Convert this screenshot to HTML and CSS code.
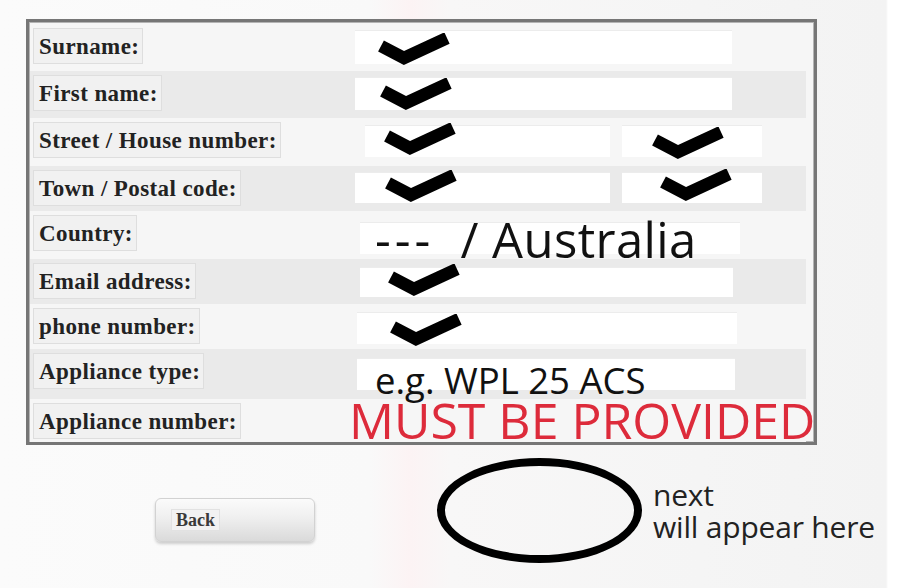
FILE: index.html
```html
<!DOCTYPE html>
<html>
<head>
<meta charset="utf-8">
<link rel="stylesheet" href="styles.css">
</head>
<body>
<div class="page">
  <div class="form">
    <div class="row r1">
      <div class="label">Surname:</div>
      <div class="fields">
        <div class="field"><svg class="check k1" viewBox="0 0 76 34" width="76" height="34"><polyline points="4,13 27,25 70,5"/></svg></div>
      </div>
    </div>
    <div class="row r2 dark">
      <div class="label">First name:</div>
      <div class="fields">
        <div class="field"><svg class="check k2" viewBox="0 0 76 34" width="76" height="34"><polyline points="4,13 27,25 70,5"/></svg></div>
      </div>
    </div>
    <div class="row r3">
      <div class="label">Street / House number:</div>
      <div class="fields">
        <div class="field main"><svg class="check k3a" viewBox="0 0 76 34" width="76" height="34"><polyline points="4,13 27,25 70,5"/></svg></div>
        <div class="field small"><svg class="check k3b" viewBox="0 0 76 34" width="76" height="34"><polyline points="4,13 27,25 70,5"/></svg></div>
      </div>
    </div>
    <div class="row r4 dark">
      <div class="label">Town / Postal code:</div>
      <div class="fields">
        <div class="field main"><svg class="check k4a" viewBox="0 0 76 34" width="76" height="34"><polyline points="4,13 27,25 70,5"/></svg></div>
        <div class="field small"><svg class="check k4b" viewBox="0 0 76 34" width="76" height="34"><polyline points="4,13 27,25 70,5"/></svg></div>
      </div>
    </div>
    <div class="row r5">
      <div class="label">Country:</div>
      <div class="fields">
        <div class="field country"><span class="dashes">---</span>&nbsp; / Australia</div>
      </div>
    </div>
    <div class="row r6 dark">
      <div class="label">Email address:</div>
      <div class="fields">
        <div class="field"><svg class="check k6" viewBox="0 0 76 34" width="76" height="34"><polyline points="4,13 27,25 70,5"/></svg></div>
      </div>
    </div>
    <div class="row r7">
      <div class="label">phone number:</div>
      <div class="fields">
        <div class="field"><svg class="check k7" viewBox="0 0 76 34" width="76" height="34"><polyline points="4,13 27,25 70,5"/></svg></div>
      </div>
    </div>
    <div class="row r8 dark">
      <div class="label">Appliance type:</div>
      <div class="fields">
        <div class="field example">e.g. WPL 25 ACS</div>
      </div>
    </div>
    <div class="row r9">
      <div class="label">Appliance number:</div>
      <div class="fields">
        <div class="must">MUST BE PROVIDED</div>
      </div>
    </div>
  </div>
  <div class="actions">
    <div class="back"><span class="back-text">Back</span></div>
    <div class="ring"></div>
    <div class="note">next<br>will appear here</div>
  </div>
</div>
</body>
</html>
```

FILE: styles.css
```css
html, body {
  margin: 0;
  padding: 0;
}
body {
  width: 903px;
  height: 588px;
  overflow: hidden;
  background: linear-gradient(to right, #fbfbfb 0, #f9f9f9 370px, #fcf3f4 410px, #f8f7f7 450px, #f5f5f5 700px, #f3f3f3 886px, #ffffff 888px);
  font-family: "Liberation Serif", serif;
}
.page {
  padding: 19px 0 0 26px;
}
.form {
  width: 784px;
  border: 3px solid #767676;
  box-shadow: inset 0 0 0 1px #b4b4b4;
  background: #f6f6f6;
  padding: 2px 0 0 1px;
}
.row {
  display: grid;
  grid-template-columns: 322px 1fr;
  align-items: start;
  padding-left: 3px;
  margin-right: 8px;
  background: #f6f6f6;
}
.row.dark {
  background: #eaeaea;
}
.r1 { height: 47px; }
.r2 { height: 47px; }
.r3 { height: 48px; }
.r4 { height: 45px; }
.r5 { height: 48px; }
.r6 { height: 45px; }
.r7 { height: 45px; }
.r8 { height: 50px; }
.r9 { height: 43px; }

.label {
  justify-self: start;
  margin-top: 4px;
  height: 34px;
  line-height: 35px;
  padding: 0 3px 0 5px;
  background: #f1f1f1;
  border: 1px solid #dedede;
  font-weight: bold;
  font-size: 23px;
  letter-spacing: 0.4px;
  color: #222;
  white-space: nowrap;
}
.fields {
  display: flex;
  gap: 12px;
}
.field {
  position: relative;
  width: 377px;
  height: 32px;
  margin-top: 6px;
  background: #ffffff;
  border-top: 1px solid #ececec;
  box-sizing: border-box;
}
.r1 .field { height: 34px; }
.r2 .field { height: 33px; }
.r3 .fields { padding-left: 10px; }
.r3 .field { margin-top: 7px; }
.r3 .field.main { width: 245px; }
.r4 .field { height: 31px; }
.r4 .field.main { width: 255px; }
.field.small { width: 140px; }
.r5 .field { margin: 11px 0 0 5px; width: 380px; }
.r6 .field { margin: 8px 0 0 5px; width: 373px; height: 30px; }
.r7 .field { margin: 8px 0 0 2px; width: 380px; }
.r8 .field { margin: 9px 0 0 2px; width: 378px; }

.check {
  position: absolute;
  display: block;
  fill: none;
  stroke: #000;
  stroke-width: 12.5;
  stroke-linejoin: miter;
  stroke-linecap: butt;
}
.k1 { left: 22px; top: 2px; }
.k2 { left: 24px; top: 0; }
.k3a { left: 18px; top: -3px; }
.k3b { left: 29px; top: 1px; }
.k4a { left: 29px; top: -3px; }
.k4b { left: 37px; top: -4px; }
.k6 { left: 27px; top: -4px; }
.k7 { left: 32px; top: 1px; }

.country {
  font-family: "Open Sans", sans-serif;
  font-size: 49px;
  line-height: 32px;
  letter-spacing: 0.4px;
  padding-left: 15px;
  color: #111;
  white-space: pre;
}
.dashes {
  letter-spacing: 4px;
}
.example {
  font-family: "Open Sans", sans-serif;
  font-size: 36.5px;
  line-height: 42px;
  padding-left: 18px;
  color: #111;
  white-space: nowrap;
}
.must {
  margin-left: -6px;
  font-family: "Open Sans", sans-serif;
  font-size: 50px;
  line-height: 43px;
  color: #dd2b3b;
  white-space: nowrap;
}

.actions {
  display: flex;
  align-items: flex-start;
  margin-top: 13px;
}
.back {
  margin: 40px 0 0 129px;
  width: 160px;
  height: 44px;
  box-sizing: border-box;
  border: 1px solid #d2d2d2;
  border-radius: 6px;
  background: linear-gradient(to bottom, #fbfbfb 0, #efefef 45%, #dadada 100%);
  box-shadow: 0 2px 3px rgba(0, 0, 0, 0.18);
  padding: 10px 0 0 15px;
}
.back-text {
  display: inline-block;
  padding: 0 4px;
  font-family: "Liberation Serif", serif;
  font-weight: bold;
  font-size: 18px;
  line-height: 20px;
  color: #3a3a3a;
  background: #f2f2f2;
  border: 1px solid #e2e2e2;
}
.ring {
  margin-left: 122px;
  width: 205px;
  height: 105px;
  box-sizing: border-box;
  border: 8px solid #000;
  border-radius: 50%;
}
.note {
  margin: 21px 0 0 11px;
  font-family: "Open Sans", sans-serif;
  font-size: 30px;
  line-height: 32px;
  letter-spacing: -0.2px;
  color: #222;
  white-space: nowrap;
}
```
